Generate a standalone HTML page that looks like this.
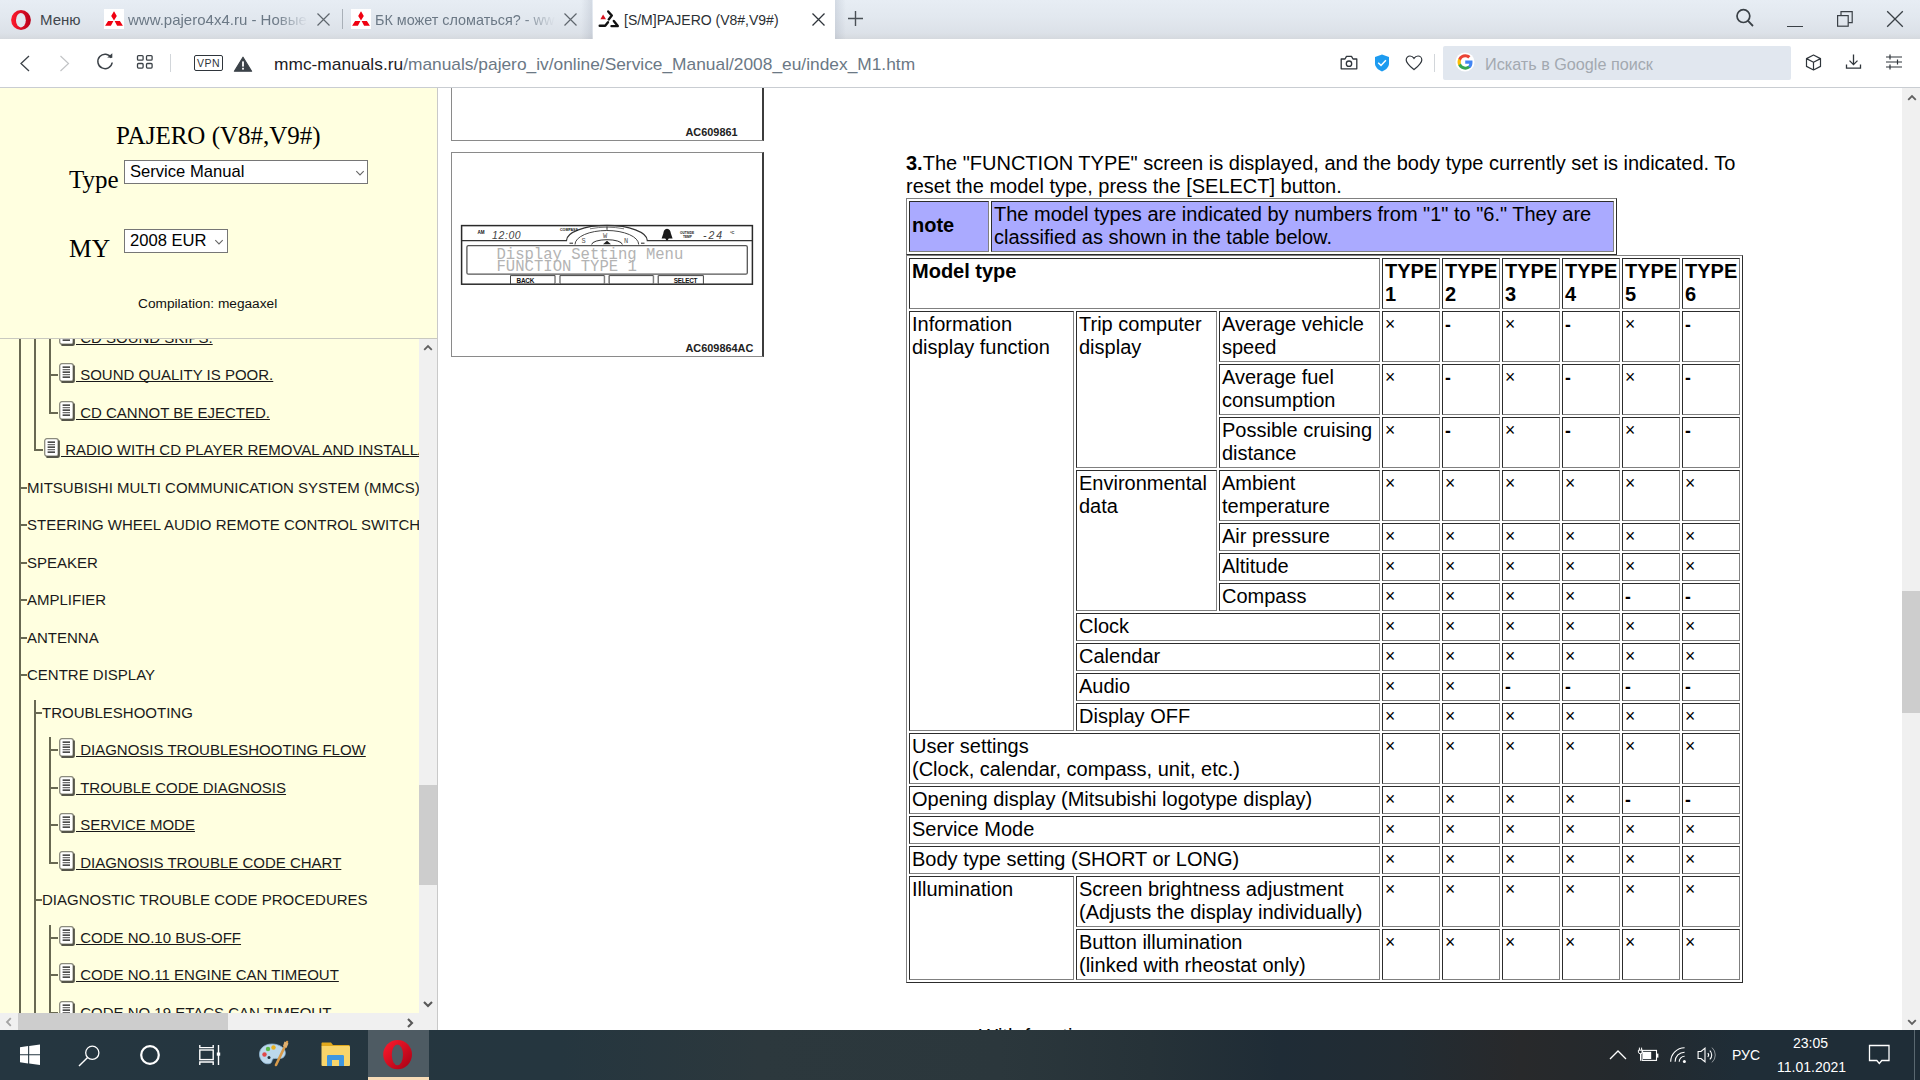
<!DOCTYPE html>
<html><head><meta charset="utf-8">
<style>
*{box-sizing:border-box}
html,body{margin:0;padding:0;width:1920px;height:1080px;overflow:hidden;background:#fff;font-family:"Liberation Sans",sans-serif;position:relative}
.abs{position:absolute}
#tabbar{left:0;top:0;width:1920px;height:39px;background:linear-gradient(#e7edf4 0%,#e2e8ef 45%,#dce1e8 85%,#d5d9de 100%)}
#addr{left:0;top:39px;width:1920px;height:49px;background:#fff;border-bottom:1px solid #c9cdd2}
#lefttop{left:0;top:88px;width:438px;height:251px;background:#ffffe0;border-right:1px solid #c9c9c9;border-bottom:1px solid #c9c9c0}
#tree{left:0;top:339px;width:438px;height:691px;background:#ffffe0;border-right:1px solid #c9c9c9;overflow:hidden}
#right{left:438px;top:88px;width:1482px;height:942px;background:#fff;overflow:hidden}
#taskbar{left:0;top:1030px;width:1920px;height:50px;background:linear-gradient(90deg,#253640 0px,#25363f 560px,#2c383d 760px,#2b373c 1000px,#263238 1150px,#1f2c36 1280px,#222c33 1400px,#28292b 1520px,#24292d 1620px,#1f2d37 1740px,#1f2d37 1920px)}

.img{border:1px solid #8a8a8a;border-right:2px solid #3c3c3c;background:#fff}
.cap{font-size:10.9px;font-weight:bold;color:#222;white-space:nowrap}
.para{font-size:20px;line-height:23px;color:#000;white-space:nowrap}
#mt,#nt{border-collapse:separate;font-size:20px;line-height:23px;color:#000;table-layout:fixed}
#mt td,#nt td{vertical-align:top;padding:1px 1px 1px 2px;white-space:nowrap;overflow:hidden}
#mt tr.h2 td{height:51px}
#mt tr.h1 td{height:28px}
#mt td.t{font-size:17.5px;line-height:23px;padding-left:2px;padding-top:1px}
#mt td.t i{font-style:normal;font-weight:bold;position:relative;top:1px}
.vsb{background:#f0f0f0}
.fav{width:20px;height:20px;background:#fff}
.fade{overflow:hidden;-webkit-mask-image:linear-gradient(90deg,#000 82%,transparent 100%)}
.serif{font-family:"Liberation Serif",serif;color:#000;white-space:nowrap;line-height:1}
.sel{background:#fff;border:1px solid #767676;font-size:16.6px;color:#000}
.sel span{position:absolute;left:5px;top:1px;line-height:19px;white-space:nowrap}
.chev{position:absolute;top:9px}
.tl{background:#686852}
.tr{font-size:15px;line-height:18px;color:#1a1a1a;white-space:nowrap}
.lnk{text-decoration:underline;text-decoration-skip-ink:none}
.doc{width:16px;height:20px}
.tt{font-size:14px;color:#3b3f45;white-space:nowrap}
</style></head><body>

<div id="tabbar" class="abs">
 <svg class="abs" style="left:10px;top:9px" width="22" height="22" viewBox="0 0 22 22"><defs><linearGradient id="og" x1="0" x2="1"><stop offset="0" stop-color="#ff1b2d"/><stop offset="1" stop-color="#b8001a"/></linearGradient></defs><ellipse cx="11" cy="11" rx="9.9" ry="10" fill="url(#og)"/><ellipse cx="10.9" cy="11.2" rx="4.9" ry="7.3" fill="#e2e8ef"/></svg>
 <div class="abs tt" style="left:40px;top:11px;font-size:15px;color:#40464c">Меню</div>
 <!-- tab1 -->
 <div class="abs fav" style="left:104px;top:9px"><svg width="20" height="20" viewBox="0 0 20 20"><path d="M10 2.2L12.8 6.9L10 11.6L7.2 6.9Z M1.1 16.7L4.1 12H9.4L6.9 16.7Z M10.6 12H15.9L18.9 16.7H13.1Z" fill="#f00010"/></svg></div>
 <div class="abs tt fade" style="left:128px;top:11px;width:180px;font-size:15px;color:#6b7885">www.pajero4x4.ru - Новые</div>
 <svg class="abs" style="left:317px;top:13px" width="13" height="13" viewBox="0 0 13 13"><path d="M0.5 0.5L12.5 12.5M12.5 0.5L0.5 12.5" stroke="#5f666d" stroke-width="1.2"/></svg>
 <div class="abs" style="left:342px;top:9px;width:1px;height:20px;background:#a9b0b8"></div>
 <!-- tab2 -->
 <div class="abs fav" style="left:351px;top:9px"><svg width="20" height="20" viewBox="0 0 20 20"><path d="M10 2.2L12.8 6.9L10 11.6L7.2 6.9Z M1.1 16.7L4.1 12H9.4L6.9 16.7Z M10.6 12H15.9L18.9 16.7H13.1Z" fill="#f00010"/></svg></div>
 <div class="abs tt fade" style="left:375px;top:11.5px;width:180px;font-size:14.4px;color:#6b7885">БК может сломаться? - www</div>
 <svg class="abs" style="left:564px;top:13px" width="13" height="13" viewBox="0 0 13 13"><path d="M0.5 0.5L12.5 12.5M12.5 0.5L0.5 12.5" stroke="#5f666d" stroke-width="1.2"/></svg>
 <!-- active tab -->
 <div class="abs" style="left:581px;top:0;width:11px;height:39px;background:linear-gradient(90deg,rgba(0,0,0,0),rgba(120,130,150,0.18))"></div>
 <div class="abs" style="left:835px;top:0;width:11px;height:39px;background:linear-gradient(90deg,rgba(120,130,150,0.18),rgba(0,0,0,0))"></div>
 <div class="abs" style="left:593px;top:0;width:242px;height:40px;background:#fff"></div>
 <svg class="abs" style="left:596px;top:8px" width="26" height="22" viewBox="0 0 26 22"><path d="M7.1 6.6L10 11.2H4.4Z" fill="#d8101c"/><path d="M12.2 3.5L15.8 7.6L12.7 11.4 M12 14.3L9.2 17.8H3.7 M17.8 12.9L21.8 18.1H15.5" fill="none" stroke="#111" stroke-width="2.4" stroke-linecap="round" stroke-linejoin="round"/></svg>
 <div class="abs tt" style="left:624px;top:11.5px;font-size:14px;color:#2b2f33">[S/M]PAJERO (V8#,V9#)</div>
 <svg class="abs" style="left:812px;top:13px" width="13" height="13" viewBox="0 0 13 13"><path d="M0.5 0.5L12.5 12.5M12.5 0.5L0.5 12.5" stroke="#2f353b" stroke-width="1.3"/></svg>
 <svg class="abs" style="left:847px;top:10px" width="17" height="17" viewBox="0 0 17 17"><path d="M8.5 1V16M1 8.5H16" stroke="#4a5056" stroke-width="1.4"/></svg>
 <!-- right -->
 <svg class="abs" style="left:1735px;top:8px" width="20" height="20" viewBox="0 0 20 20"><circle cx="8.4" cy="8.1" r="6.4" fill="none" stroke="#3a4046" stroke-width="1.7"/><path d="M12.8 12.7L18 18" stroke="#3a4046" stroke-width="1.8"/></svg>
 <div class="abs" style="left:1787px;top:26px;width:16px;height:1.2px;background:#3a4046"></div>
 <svg class="abs" style="left:1836px;top:10px" width="18" height="18" viewBox="0 0 18 18"><rect x="1.6" y="5.6" width="10.6" height="10.6" fill="none" stroke="#3a4046" stroke-width="1.2"/><path d="M5 5.6V1.6H16.2V12.6H12.2" fill="none" stroke="#3a4046" stroke-width="1.2"/></svg>
 <svg class="abs" style="left:1886px;top:10px" width="18" height="18" viewBox="0 0 18 18"><path d="M1.2 1.2L16.8 16.8M16.8 1.2L1.2 16.8" stroke="#3a4046" stroke-width="1.3"/></svg>
</div>


<div id="addr" class="abs">
 <svg class="abs" style="left:19px;top:15.5px" width="12" height="18" viewBox="0 0 12 18"><path d="M10 1L2 8.5L10 16" fill="none" stroke="#3b4147" stroke-width="1.3"/></svg>
 <svg class="abs" style="left:59px;top:15.5px" width="12" height="18" viewBox="0 0 12 18"><path d="M1.5 1L9.5 8.5L1.5 16" fill="none" stroke="#c2c4c6" stroke-width="1.2"/></svg>
 <svg class="abs" style="left:96px;top:14px" width="19" height="18" viewBox="0 0 19 18"><path d="M15.3 4.8A7.2 7.2 0 1 0 16.2 9.5" fill="none" stroke="#3b4147" stroke-width="1.5"/><path d="M11.2 4.5L16.3 4.8L16.3 0.2Z" fill="#3b4147"/></svg>
 <svg class="abs" style="left:136px;top:15px" width="18" height="16" viewBox="0 0 18 16"><g fill="none" stroke="#3b4147" stroke-width="1.3"><rect x="1.5" y="1.6" width="5.6" height="4.6" rx="1"/><rect x="10.5" y="1.6" width="5.6" height="4.6" rx="1"/><rect x="1.5" y="9.5" width="5.6" height="4.6" rx="1"/><rect x="10.5" y="9.5" width="5.6" height="4.6" rx="1"/></g></svg>
 <div class="abs" style="left:170px;top:15px;width:1px;height:18px;background:#d2d6da"></div>
 <div class="abs" style="left:194px;top:16px;width:29px;height:16px;border:1.3px solid #2f353b;border-radius:2px;font-size:10.5px;line-height:14px;text-align:center;color:#2f353b;letter-spacing:0.4px">VPN</div>
 <svg class="abs" style="left:233px;top:17px" width="20" height="16" viewBox="0 0 20 16"><path d="M10 1.2L18.6 15.2H1.4Z" fill="#3b4248" stroke="#3b4248" stroke-width="1.2" stroke-linejoin="round"/><rect x="9.1" y="5.4" width="1.8" height="5.2" fill="#fff"/><rect x="9.1" y="11.8" width="1.8" height="1.8" fill="#fff"/></svg>
 <div class="abs tt" style="left:274px;top:14.5px;font-size:17.35px;color:#6b7885"><span style="color:#1d2125">mmc-manuals.ru</span>/manuals/pajero_iv/online/Service_Manual/2008_eu/index_M1.htm</div>
 <svg class="abs" style="left:1340px;top:16px" width="18" height="15" viewBox="0 0 18 15"><path d="M1.2 4H5L6.5 1.4H11.5L13 4H16.8V13.8H1.2Z" fill="none" stroke="#2f353b" stroke-width="1.3" stroke-linejoin="round"/><circle cx="9" cy="8.7" r="2.7" fill="none" stroke="#2f353b" stroke-width="1.3"/></svg>
 <svg class="abs" style="left:1374px;top:15px" width="16" height="18" viewBox="0 0 16 18"><path d="M8 0.5L15 3V9.5C15 13 12 15.8 8 17.5C4 15.8 1 13 1 9.5V3Z" fill="#1d9bf0"/><path d="M4.2 8.8L7 11.4L11.9 6.2" fill="none" stroke="#fff" stroke-width="1.5"/></svg>
 <svg class="abs" style="left:1405px;top:15.7px" width="18" height="16" viewBox="0 0 18 16"><path d="M9 14.6C4.5 10.8 1.2 8.2 1.2 4.9C1.2 2.7 2.9 1 5 1C6.8 1 8.1 2 9 3.4C9.9 2 11.2 1 13 1C15.1 1 16.8 2.7 16.8 4.9C16.8 8.2 13.5 10.8 9 14.6Z" fill="none" stroke="#2f353b" stroke-width="1.2"/></svg>
 <div class="abs" style="left:1434px;top:15px;width:1px;height:18px;background:#d2d6da"></div>
 <div class="abs" style="left:1443px;top:7px;width:348px;height:34px;background:#e1e7ef;border-radius:2px"></div>
 <svg class="abs" style="left:1455px;top:13px" width="20" height="20" viewBox="0 0 20 20"><circle cx="10" cy="10" r="9.5" fill="#fff"/><g transform="translate(10 10) scale(1.15) translate(-9.8 -10)"><path d="M16.3 10.2c0-.5 0-1-.1-1.4H10v2.7h3.6c-.2.9-.7 1.6-1.4 2.1v1.7h2.2c1.2-1.1 1.9-2.8 1.9-4.8z" fill="#4285f4"/><path d="M10 16.7c1.8 0 3.3-.6 4.4-1.6l-2.2-1.7c-.6.4-1.3.7-2.2.7-1.7 0-3.2-1.2-3.7-2.7H4v1.7c1.1 2.2 3.4 3.6 6 3.6z" fill="#34a853"/><path d="M6.3 11.4c-.1-.4-.2-.9-.2-1.4s.1-1 .2-1.4V6.9H4C3.6 7.8 3.3 8.9 3.3 10s.3 2.2.7 3.1l2.3-1.7z" fill="#fbbc05"/><path d="M10 5.9c1 0 1.9.3 2.6 1l1.9-1.9C13.3 3.9 11.8 3.3 10 3.3 7.4 3.3 5.1 4.8 4 6.9l2.3 1.7c.5-1.6 2-2.7 3.7-2.7z" fill="#ea4335"/></g></svg>
 <div class="abs tt" style="left:1485px;top:15.5px;font-size:16.2px;color:#a3a9b0">Искать в Google поиск</div>
 <svg class="abs" style="left:1805px;top:15px" width="17" height="17" viewBox="0 0 17 17"><path d="M8.5 1L15.5 4.6V12.4L8.5 16L1.5 12.4V4.6Z M1.5 4.6L8.5 8.2L15.5 4.6 M8.5 8.2V16" fill="none" stroke="#2f353b" stroke-width="1.2" stroke-linejoin="round"/></svg>
 <svg class="abs" style="left:1845px;top:15px" width="17" height="16" viewBox="0 0 17 16"><path d="M8.5 0.5V10.5M4.5 6.6L8.5 10.6L12.5 6.6M1.5 10.5V14.2H15.5V10.5" fill="none" stroke="#2f353b" stroke-width="1.3"/></svg>
 <svg class="abs" style="left:1885px;top:15px" width="18" height="16" viewBox="0 0 18 16"><path d="M1 3H17M1 8H17M1 13H17M5 0.5V5.5M12.5 5.5V10.5M5 10.5V15.5" fill="none" stroke="#2f353b" stroke-width="1.2"/></svg>
</div>


<div id="lefttop" class="abs">
 <div class="abs serif" style="left:116px;top:35px;font-size:25px">PAJERO (V8#,V9#)</div>
 <div class="abs serif" style="left:69px;top:79px;font-size:25px">Type</div>
 <div class="abs sel" style="left:124px;top:72px;width:244px;height:24px"><span>Service Manual</span><svg class="chev" style="left:230px" width="10" height="6" viewBox="0 0 10 6"><path d="M1.3 1.2L5 4.9L8.7 1.2" fill="none" stroke="#666" stroke-width="1.1"/></svg></div>
 <div class="abs serif" style="left:69px;top:148px;font-size:25.5px">MY</div>
 <div class="abs sel" style="left:124px;top:141px;width:104px;height:24px"><span>2008 EUR</span><svg class="chev" style="left:89px" width="10" height="6" viewBox="0 0 10 6"><path d="M1.3 1.2L5 4.9L8.7 1.2" fill="none" stroke="#666" stroke-width="1.1"/></svg></div>
 <div class="abs tt" style="left:138px;top:208px;font-size:13.7px;color:#111">Compilation: megaaxel</div>
</div>

<div id="tree" class="abs">
<div class="abs tl" style="left:19px;top:0.0px;width:2px;height:674.0px"></div>
<div class="abs tl" style="left:34px;top:0.0px;width:2px;height:112.0px"></div>
<div class="abs tl" style="left:49px;top:0.0px;width:2px;height:74.5px"></div>
<div class="abs tl" style="left:34px;top:360.5px;width:2px;height:313.5px"></div>
<div class="abs tl" style="left:49px;top:398.0px;width:2px;height:126.5px"></div>
<div class="abs tl" style="left:49px;top:586.0px;width:2px;height:88.0px"></div>
<div class="abs tl" style="left:50px;top:-2.5px;width:8px;height:2px"></div>
<div class="abs doc" style="left:59px;top:-13.3px"><svg width="16" height="20" viewBox="0 0 16 20"><rect x="0.7" y="0.7" width="13.6" height="17.4" rx="2.2" fill="#fff" stroke="#8a8a7c" stroke-width="1.3"/><path d="M14.9 2.4V17.4Q14.9 18.9 13.4 18.9H2.4" fill="none" stroke="#55554a" stroke-width="2"/><g stroke-width="1.25"><path d="M3.6 4.2H11M3.6 9.2H11M3.6 14.2H11" stroke="#111"/><path d="M3.6 6.7H11M3.6 11.7H11" stroke="#6c6c6c"/></g></svg></div>
<div class="abs tr lnk" style="left:76px;top:-10.5px">&nbsp;CD SOUND SKIPS.</div>
<div class="abs tl" style="left:50px;top:35.0px;width:8px;height:2px"></div>
<div class="abs doc" style="left:59px;top:24.2px"><svg width="16" height="20" viewBox="0 0 16 20"><rect x="0.7" y="0.7" width="13.6" height="17.4" rx="2.2" fill="#fff" stroke="#8a8a7c" stroke-width="1.3"/><path d="M14.9 2.4V17.4Q14.9 18.9 13.4 18.9H2.4" fill="none" stroke="#55554a" stroke-width="2"/><g stroke-width="1.25"><path d="M3.6 4.2H11M3.6 9.2H11M3.6 14.2H11" stroke="#111"/><path d="M3.6 6.7H11M3.6 11.7H11" stroke="#6c6c6c"/></g></svg></div>
<div class="abs tr lnk" style="left:76px;top:27.0px">&nbsp;SOUND QUALITY IS POOR.</div>
<div class="abs tl" style="left:50px;top:72.5px;width:8px;height:2px"></div>
<div class="abs doc" style="left:59px;top:61.7px"><svg width="16" height="20" viewBox="0 0 16 20"><rect x="0.7" y="0.7" width="13.6" height="17.4" rx="2.2" fill="#fff" stroke="#8a8a7c" stroke-width="1.3"/><path d="M14.9 2.4V17.4Q14.9 18.9 13.4 18.9H2.4" fill="none" stroke="#55554a" stroke-width="2"/><g stroke-width="1.25"><path d="M3.6 4.2H11M3.6 9.2H11M3.6 14.2H11" stroke="#111"/><path d="M3.6 6.7H11M3.6 11.7H11" stroke="#6c6c6c"/></g></svg></div>
<div class="abs tr lnk" style="left:76px;top:64.5px">&nbsp;CD CANNOT BE EJECTED.</div>
<div class="abs tl" style="left:35px;top:110.0px;width:8px;height:2px"></div>
<div class="abs doc" style="left:44px;top:99.2px"><svg width="16" height="20" viewBox="0 0 16 20"><rect x="0.7" y="0.7" width="13.6" height="17.4" rx="2.2" fill="#fff" stroke="#8a8a7c" stroke-width="1.3"/><path d="M14.9 2.4V17.4Q14.9 18.9 13.4 18.9H2.4" fill="none" stroke="#55554a" stroke-width="2"/><g stroke-width="1.25"><path d="M3.6 4.2H11M3.6 9.2H11M3.6 14.2H11" stroke="#111"/><path d="M3.6 6.7H11M3.6 11.7H11" stroke="#6c6c6c"/></g></svg></div>
<div class="abs tr lnk" style="left:61px;top:102.0px">&nbsp;RADIO WITH CD PLAYER REMOVAL AND INSTALLATION</div>
<div class="abs tl" style="left:20px;top:147.5px;width:7px;height:2px"></div>
<div class="abs tr" style="left:27px;top:139.5px">MITSUBISHI MULTI COMMUNICATION SYSTEM (MMCS)</div>
<div class="abs tl" style="left:20px;top:185.0px;width:7px;height:2px"></div>
<div class="abs tr" style="left:27px;top:177.0px">STEERING WHEEL AUDIO REMOTE CONTROL SWITCH</div>
<div class="abs tl" style="left:20px;top:222.5px;width:7px;height:2px"></div>
<div class="abs tr" style="left:27px;top:214.5px">SPEAKER</div>
<div class="abs tl" style="left:20px;top:260.0px;width:7px;height:2px"></div>
<div class="abs tr" style="left:27px;top:252.0px">AMPLIFIER</div>
<div class="abs tl" style="left:20px;top:297.5px;width:7px;height:2px"></div>
<div class="abs tr" style="left:27px;top:289.5px">ANTENNA</div>
<div class="abs tl" style="left:20px;top:335.0px;width:7px;height:2px"></div>
<div class="abs tr" style="left:27px;top:327.0px">CENTRE DISPLAY</div>
<div class="abs tl" style="left:35px;top:372.5px;width:7px;height:2px"></div>
<div class="abs tr" style="left:42px;top:364.5px">TROUBLESHOOTING</div>
<div class="abs tl" style="left:50px;top:410.0px;width:8px;height:2px"></div>
<div class="abs doc" style="left:59px;top:399.2px"><svg width="16" height="20" viewBox="0 0 16 20"><rect x="0.7" y="0.7" width="13.6" height="17.4" rx="2.2" fill="#fff" stroke="#8a8a7c" stroke-width="1.3"/><path d="M14.9 2.4V17.4Q14.9 18.9 13.4 18.9H2.4" fill="none" stroke="#55554a" stroke-width="2"/><g stroke-width="1.25"><path d="M3.6 4.2H11M3.6 9.2H11M3.6 14.2H11" stroke="#111"/><path d="M3.6 6.7H11M3.6 11.7H11" stroke="#6c6c6c"/></g></svg></div>
<div class="abs tr lnk" style="left:76px;top:402.0px">&nbsp;DIAGNOSIS TROUBLESHOOTING FLOW</div>
<div class="abs tl" style="left:50px;top:447.5px;width:8px;height:2px"></div>
<div class="abs doc" style="left:59px;top:436.7px"><svg width="16" height="20" viewBox="0 0 16 20"><rect x="0.7" y="0.7" width="13.6" height="17.4" rx="2.2" fill="#fff" stroke="#8a8a7c" stroke-width="1.3"/><path d="M14.9 2.4V17.4Q14.9 18.9 13.4 18.9H2.4" fill="none" stroke="#55554a" stroke-width="2"/><g stroke-width="1.25"><path d="M3.6 4.2H11M3.6 9.2H11M3.6 14.2H11" stroke="#111"/><path d="M3.6 6.7H11M3.6 11.7H11" stroke="#6c6c6c"/></g></svg></div>
<div class="abs tr lnk" style="left:76px;top:439.5px">&nbsp;TROUBLE CODE DIAGNOSIS</div>
<div class="abs tl" style="left:50px;top:485.0px;width:8px;height:2px"></div>
<div class="abs doc" style="left:59px;top:474.2px"><svg width="16" height="20" viewBox="0 0 16 20"><rect x="0.7" y="0.7" width="13.6" height="17.4" rx="2.2" fill="#fff" stroke="#8a8a7c" stroke-width="1.3"/><path d="M14.9 2.4V17.4Q14.9 18.9 13.4 18.9H2.4" fill="none" stroke="#55554a" stroke-width="2"/><g stroke-width="1.25"><path d="M3.6 4.2H11M3.6 9.2H11M3.6 14.2H11" stroke="#111"/><path d="M3.6 6.7H11M3.6 11.7H11" stroke="#6c6c6c"/></g></svg></div>
<div class="abs tr lnk" style="left:76px;top:477.0px">&nbsp;SERVICE MODE</div>
<div class="abs tl" style="left:50px;top:522.5px;width:8px;height:2px"></div>
<div class="abs doc" style="left:59px;top:511.7px"><svg width="16" height="20" viewBox="0 0 16 20"><rect x="0.7" y="0.7" width="13.6" height="17.4" rx="2.2" fill="#fff" stroke="#8a8a7c" stroke-width="1.3"/><path d="M14.9 2.4V17.4Q14.9 18.9 13.4 18.9H2.4" fill="none" stroke="#55554a" stroke-width="2"/><g stroke-width="1.25"><path d="M3.6 4.2H11M3.6 9.2H11M3.6 14.2H11" stroke="#111"/><path d="M3.6 6.7H11M3.6 11.7H11" stroke="#6c6c6c"/></g></svg></div>
<div class="abs tr lnk" style="left:76px;top:514.5px">&nbsp;DIAGNOSIS TROUBLE CODE CHART</div>
<div class="abs tl" style="left:35px;top:560.0px;width:7px;height:2px"></div>
<div class="abs tr" style="left:42px;top:552.0px">DIAGNOSTIC TROUBLE CODE PROCEDURES</div>
<div class="abs tl" style="left:50px;top:597.5px;width:8px;height:2px"></div>
<div class="abs doc" style="left:59px;top:586.7px"><svg width="16" height="20" viewBox="0 0 16 20"><rect x="0.7" y="0.7" width="13.6" height="17.4" rx="2.2" fill="#fff" stroke="#8a8a7c" stroke-width="1.3"/><path d="M14.9 2.4V17.4Q14.9 18.9 13.4 18.9H2.4" fill="none" stroke="#55554a" stroke-width="2"/><g stroke-width="1.25"><path d="M3.6 4.2H11M3.6 9.2H11M3.6 14.2H11" stroke="#111"/><path d="M3.6 6.7H11M3.6 11.7H11" stroke="#6c6c6c"/></g></svg></div>
<div class="abs tr lnk" style="left:76px;top:589.5px">&nbsp;CODE NO.10 BUS-OFF</div>
<div class="abs tl" style="left:50px;top:635.0px;width:8px;height:2px"></div>
<div class="abs doc" style="left:59px;top:624.2px"><svg width="16" height="20" viewBox="0 0 16 20"><rect x="0.7" y="0.7" width="13.6" height="17.4" rx="2.2" fill="#fff" stroke="#8a8a7c" stroke-width="1.3"/><path d="M14.9 2.4V17.4Q14.9 18.9 13.4 18.9H2.4" fill="none" stroke="#55554a" stroke-width="2"/><g stroke-width="1.25"><path d="M3.6 4.2H11M3.6 9.2H11M3.6 14.2H11" stroke="#111"/><path d="M3.6 6.7H11M3.6 11.7H11" stroke="#6c6c6c"/></g></svg></div>
<div class="abs tr lnk" style="left:76px;top:627.0px">&nbsp;CODE NO.11 ENGINE CAN TIMEOUT</div>
<div class="abs tl" style="left:50px;top:672.5px;width:8px;height:2px"></div>
<div class="abs doc" style="left:59px;top:661.7px"><svg width="16" height="20" viewBox="0 0 16 20"><rect x="0.7" y="0.7" width="13.6" height="17.4" rx="2.2" fill="#fff" stroke="#8a8a7c" stroke-width="1.3"/><path d="M14.9 2.4V17.4Q14.9 18.9 13.4 18.9H2.4" fill="none" stroke="#55554a" stroke-width="2"/><g stroke-width="1.25"><path d="M3.6 4.2H11M3.6 9.2H11M3.6 14.2H11" stroke="#111"/><path d="M3.6 6.7H11M3.6 11.7H11" stroke="#6c6c6c"/></g></svg></div>
<div class="abs tr lnk" style="left:76px;top:664.5px">&nbsp;CODE NO.19 ETACS CAN TIMEOUT</div>
 <div class="abs" style="left:419px;top:0;width:18px;height:674px;background:#f0f0f0"></div>
 <div class="abs" style="left:419px;top:446px;width:18px;height:100px;background:#cdcdcd"></div>
 <svg class="abs" style="left:423px;top:5px" width="10" height="7" viewBox="0 0 10 7"><path d="M1.2 5.8L5 2L8.8 5.8" fill="none" stroke="#606060" stroke-width="1.8"/></svg>
 <svg class="abs" style="left:423px;top:662px" width="10" height="7" viewBox="0 0 10 7"><path d="M1 1L5 5L9 1" fill="none" stroke="#585858" stroke-width="2.1"/></svg>
 <div class="abs" style="left:0;top:674px;width:437px;height:17px;background:#f0f0f0"></div>
 <div class="abs" style="left:18px;top:674px;width:210px;height:17px;background:#cdcdcd"></div>
 <svg class="abs" style="left:5px;top:678px" width="7" height="10" viewBox="0 0 7 10"><path d="M5.8 1.2L2 5L5.8 8.8" fill="none" stroke="#a3a3a3" stroke-width="1.8"/></svg>
 <svg class="abs" style="left:407px;top:679px" width="7" height="10" viewBox="0 0 7 10"><path d="M1 1L5 5L1 9" fill="none" stroke="#585858" stroke-width="2.1"/></svg>
</div>


<div id="right" class="abs">
 <div class="abs img" style="left:13px;top:-150px;width:313px;height:203px">
   <div class="abs cap" style="left:233.5px;top:186.5px">AC609861</div>
 </div>
 <div class="abs img" style="left:13px;top:64px;width:313px;height:205px">
   <svg class="abs" style="left:-1px;top:-1px" width="313" height="205" viewBox="0 0 313 205">
<g fill="none" stroke="#1e1e1e">
<rect x="10.6" y="73.6" width="290.8" height="58.6" stroke-width="1.5" stroke="#2a2a2a"/>
<path d="M11 88.6H115.5A40.4 15.2 0 0 1 196.3 88.6H301" stroke-width="1.2" stroke="#333"/>
<path d="M124 92.5A31.8 14 0 0 1 187.7 92.5" stroke-width="1" stroke="#444"/>
<path d="M139 76.8Q156 73.5 173 76.8" stroke-width="0.8" stroke="#555"/>
<path d="M140.7 92.5A15.3 4.8 0 0 1 171.3 92.5" stroke-width="1" stroke="#333"/>
<path d="M156 74.5V77.8" stroke-width="1" stroke="#333"/>
<rect x="15.9" y="93.6" width="280.4" height="28.6" rx="1.5" stroke-width="1.3" stroke="#555"/>
<path d="M59.5 132V123.6H104V132 M109 132V123.6H153.3V132 M158.2 132V123.6H202.3V132 M207.3 132V123.6H252.4V132" stroke-width="1" stroke="#444"/>
<path d="M104.5 123.6V132M108.5 123.6V132M153.8 123.6V132M157.7 123.6V132M202.8 123.6V132M206.8 123.6V132" stroke-width="0.7" stroke="#999"/>
</g>
<path d="M156 88.8L152 92.3H160Z" fill="#1e1e1e"/>
<path d="M118.5 91.2H122M190 91.2H193.5" stroke="#222" stroke-width="1"/>
<g font-family="Liberation Sans" font-weight="bold" fill="#111">
<text x="26.5" y="82" font-size="4.6">AM</text>
<text x="109" y="79.2" font-size="3.6">COMPASS</text>
<text x="229" y="82.4" font-size="3.2">OUTSIDE</text>
<text x="232" y="86" font-size="3.2">TEMP</text>
<text x="65.5" y="131.3" font-size="6.4" letter-spacing="-0.2">BACK</text>
<text x="222.8" y="131.3" font-size="6.4" letter-spacing="-0.3">SELECT</text>
<text x="279" y="81.5" font-size="4">°C</text>
</g>
<g font-family="Liberation Sans" fill="#444" font-size="10.5" font-style="italic">
<text x="41" y="86.5" letter-spacing="0.6">12:00</text>
<text x="252" y="86.7" letter-spacing="2">-24</text>
</g>
<g font-family="Liberation Mono" fill="#555" font-size="7">
<text x="130.5" y="91">S</text><text x="152" y="86">W</text><text x="173" y="91">N</text>
</g>
<path d="M216 76.8C213.5 76.8 212.6 79 212.3 81.5L210.6 86.5H221.6L219.9 81.5C219.6 79 218.6 76.8 216 76.8Z M214.2 86.5L216 89L217.8 86.5Z" fill="#1a1a1a"/>
<g font-family="Liberation Mono" fill="#b3b3b3" font-size="15.6">
<text x="45.5" y="106.8" letter-spacing="-0.02">Display Setting Menu</text>
<text x="45.5" y="118.6">FUNCTION TYPE 1</text>
</g>
</svg>

   <div class="abs cap" style="left:233.5px;top:188.5px">AC609864AC</div>
 </div>
 <div class="abs para" style="left:468px;top:64px;width:900px"><b>3.</b>The "FUNCTION TYPE" screen is displayed, and the body type currently set is indicated. To<br>reset the model type, press the [SELECT] button.</div>
 <table id="nt" class="abs" style="left:468px;top:110px" cellspacing="2" cellpadding="1" border="1"><tr><td style="width:80px;height:51px;background:#aaaaff;vertical-align:middle"><b style="position:relative;top:-1.5px">note</b></td><td style="width:623px;background:#aaaaff">The model types are indicated by numbers from "1" to "6." They are<br>classified as shown in the table below.</td></tr></table>
 <div class="abs" style="left:468px;top:167px">
<table id="mt" cellspacing="2" cellpadding="1" border="1">
<colgroup><col style="width:165px"><col style="width:141px"><col style="width:161px"><col style="width:58px"><col style="width:58px"><col style="width:58px"><col style="width:58px"><col style="width:58px"><col style="width:58px"></colgroup>
<tr class="h2"><td colspan="3"><b>Model type</b></td><td><b>TYPE<br>1</b></td><td><b>TYPE<br>2</b></td><td><b>TYPE<br>3</b></td><td><b>TYPE<br>4</b></td><td><b>TYPE<br>5</b></td><td><b>TYPE<br>6</b></td></tr>
<tr class="h2"><td rowspan="11">Information<br>display function</td><td rowspan="3">Trip computer<br>display</td><td>Average vehicle<br>speed</td><td class="t">×</td><td class="t"><i>-</i></td><td class="t">×</td><td class="t"><i>-</i></td><td class="t">×</td><td class="t"><i>-</i></td></tr>
<tr class="h2"><td>Average fuel<br>consumption</td><td class="t">×</td><td class="t"><i>-</i></td><td class="t">×</td><td class="t"><i>-</i></td><td class="t">×</td><td class="t"><i>-</i></td></tr>
<tr class="h2"><td>Possible cruising<br>distance</td><td class="t">×</td><td class="t"><i>-</i></td><td class="t">×</td><td class="t"><i>-</i></td><td class="t">×</td><td class="t"><i>-</i></td></tr>
<tr class="h2"><td rowspan="4">Environmental<br>data</td><td>Ambient<br>temperature</td><td class="t">×</td><td class="t">×</td><td class="t">×</td><td class="t">×</td><td class="t">×</td><td class="t">×</td></tr>
<tr class="h1"><td>Air pressure</td><td class="t">×</td><td class="t">×</td><td class="t">×</td><td class="t">×</td><td class="t">×</td><td class="t">×</td></tr>
<tr class="h1"><td>Altitude</td><td class="t">×</td><td class="t">×</td><td class="t">×</td><td class="t">×</td><td class="t">×</td><td class="t">×</td></tr>
<tr class="h1"><td>Compass</td><td class="t">×</td><td class="t">×</td><td class="t">×</td><td class="t">×</td><td class="t"><i>-</i></td><td class="t"><i>-</i></td></tr>
<tr class="h1"><td colspan="2">Clock</td><td class="t">×</td><td class="t">×</td><td class="t">×</td><td class="t">×</td><td class="t">×</td><td class="t">×</td></tr>
<tr class="h1"><td colspan="2">Calendar</td><td class="t">×</td><td class="t">×</td><td class="t">×</td><td class="t">×</td><td class="t">×</td><td class="t">×</td></tr>
<tr class="h1"><td colspan="2">Audio</td><td class="t">×</td><td class="t">×</td><td class="t"><i>-</i></td><td class="t"><i>-</i></td><td class="t"><i>-</i></td><td class="t"><i>-</i></td></tr>
<tr class="h1"><td colspan="2">Display OFF</td><td class="t">×</td><td class="t">×</td><td class="t">×</td><td class="t">×</td><td class="t">×</td><td class="t">×</td></tr>
<tr class="h2"><td colspan="3">User settings<br>(Clock, calendar, compass, unit, etc.)</td><td class="t">×</td><td class="t">×</td><td class="t">×</td><td class="t">×</td><td class="t">×</td><td class="t">×</td></tr>
<tr class="h1"><td colspan="3">Opening display (Mitsubishi logotype display)</td><td class="t">×</td><td class="t">×</td><td class="t">×</td><td class="t">×</td><td class="t"><i>-</i></td><td class="t"><i>-</i></td></tr>
<tr class="h1"><td colspan="3">Service Mode</td><td class="t">×</td><td class="t">×</td><td class="t">×</td><td class="t">×</td><td class="t">×</td><td class="t">×</td></tr>
<tr class="h1"><td colspan="3">Body type setting (SHORT or LONG)</td><td class="t">×</td><td class="t">×</td><td class="t">×</td><td class="t">×</td><td class="t">×</td><td class="t">×</td></tr>
<tr class="h2"><td rowspan="2">Illumination</td><td colspan="2">Screen brightness adjustment<br>(Adjusts the display individually)</td><td class="t">×</td><td class="t">×</td><td class="t">×</td><td class="t">×</td><td class="t">×</td><td class="t">×</td></tr>
<tr class="h2"><td colspan="2">Button illumination<br>(linked with rheostat only)</td><td class="t">×</td><td class="t">×</td><td class="t">×</td><td class="t">×</td><td class="t">×</td><td class="t">×</td></tr>
</table>
 </div>
 <div class="abs para" style="left:541px;top:936.5px">With function</div>
 <div class="abs vsb" style="left:1464px;top:0;width:18px;height:942px"></div>
 <div class="abs" style="left:1464px;top:503px;width:18px;height:122px;background:#cdcdcd"></div>
 <svg class="abs" style="left:1469px;top:6px" width="10" height="7" viewBox="0 0 10 7"><path d="M1.2 5.8L5 2L8.8 5.8" fill="none" stroke="#606060" stroke-width="1.8"/></svg>
 <svg class="abs" style="left:1469px;top:931px" width="10" height="7" viewBox="0 0 10 7"><path d="M1.2 1.2L5 5L8.8 1.2" fill="none" stroke="#606060" stroke-width="1.8"/></svg>
</div>


<div id="taskbar" class="abs">
 <svg class="abs" style="left:19px;top:14px" width="22" height="22" viewBox="0 0 22 22"><path d="M1 3.2L9.1 2.1V10.2H1Z M10.2 1.9L21 0.5V10.2H10.2Z M1 11.3H9.1V19.4L1 18.3Z M10.2 11.3H21V21L10.2 19.6Z" fill="#fff"/></svg>
 <svg class="abs" style="left:78px;top:14px" width="24" height="24" viewBox="0 0 24 24"><circle cx="14.3" cy="8.8" r="6.6" fill="none" stroke="#fff" stroke-width="1.3"/><path d="M9.6 13.5L1 22" stroke="#fff" stroke-width="1.4"/></svg>
 <svg class="abs" style="left:138px;top:13px" width="24" height="24" viewBox="0 0 24 24"><circle cx="12" cy="12" r="8.8" fill="none" stroke="#fff" stroke-width="2.2"/></svg>
 <svg class="abs" style="left:198px;top:14px" width="24" height="22" viewBox="0 0 24 22"><g fill="none" stroke="#fff" stroke-width="1.4"><path d="M1.8 1V3.6H15.2V1"/><rect x="1.8" y="6" width="13.4" height="9.6"/><path d="M1.8 21V18H15.2V21"/><path d="M20.5 1V21"/></g><rect x="18.8" y="8.5" width="3.4" height="3.2" fill="#fff"/></svg>
 <svg class="abs" style="left:258px;top:10px" width="32" height="30" viewBox="0 0 32 30"><path d="M14 4C6 4 1 9 1.5 15C2 21 7 25 12 23.5C15 22.5 13 19 16 18.5C20 18 25 20 27 15C29 9 22 4 14 4Z" fill="#bcd8ec" stroke="#8fb5d0" stroke-width="0.8"/><circle cx="6.5" cy="14.5" r="2.2" fill="#e04848"/><circle cx="10" cy="9" r="2.2" fill="#5cb84a"/><circle cx="15.5" cy="7.5" r="2.2" fill="#e8b020"/><circle cx="11" cy="17.5" r="1.5" fill="#263640"/><path d="M29 2L18 25" stroke="#d79a4a" stroke-width="2.6" stroke-linecap="round"/><path d="M26.5 1.5L30.5 3.5L28.5 8L25 6Z" fill="#e0b070"/></svg>
 <svg class="abs" style="left:321px;top:12px" width="30" height="25" viewBox="0 0 30 25"><path d="M0.5 3V1.5C0.5 0.9 0.9 0.5 1.5 0.5H10L12 3H28.5V5H0.5Z" fill="#e0a81c"/><rect x="0.5" y="4" width="28.5" height="20" rx="1" fill="#f8d56a"/><path d="M6 24V14.3Q6 13 7.3 13H21.7Q23 13 23 14.3V24H18V18H11V24Z" fill="#3f97e0"/></svg>
 <div class="abs" style="left:368px;top:0;width:61px;height:50px;background:#4e5b63"></div>
 <div class="abs" style="left:368px;top:47px;width:61px;height:3px;background:#f8dcb8"></div>
 <svg class="abs" style="left:383px;top:10px" width="30" height="30" viewBox="0 0 30 30"><defs><linearGradient id="og2" x1="0" x2="1" y1="0" y2="1"><stop offset="0" stop-color="#ff1b2d"/><stop offset="1" stop-color="#a70014"/></linearGradient></defs><ellipse cx="14.6" cy="14.6" rx="14.4" ry="14.6" fill="url(#og2)"/><ellipse cx="14.4" cy="14.8" rx="5.6" ry="10.4" fill="#4e5b63"/></svg>
 <!-- tray -->
 <svg class="abs" style="left:1609px;top:20px" width="18" height="10" viewBox="0 0 18 10"><path d="M1 9L9 1L17 9" fill="none" stroke="#fff" stroke-width="1.3"/></svg>
 <svg class="abs" style="left:1637px;top:15px" width="22" height="18" viewBox="0 0 22 18"><path d="M2.4 2.6V5M4.6 2.6V5" stroke="#fff" stroke-width="1"/><path d="M1.4 5.2H5.6V7.2Q5.6 8.6 3.5 8.6Q1.4 8.6 1.4 7.2Z" fill="none" stroke="#fff" stroke-width="1"/><path d="M3.5 8.6V15.7" stroke="#fff" stroke-width="1"/><rect x="5.1" y="5.4" width="14.4" height="10" fill="none" stroke="#fff" stroke-width="1.1"/><rect x="6" y="6.8" width="8.2" height="7.2" fill="#fff"/><rect x="20" y="8.6" width="1.4" height="4" fill="#fff"/></svg>
 <svg class="abs" style="left:1669px;top:16px" width="20" height="18" viewBox="0 0 20 18"><g fill="none" stroke="#fff" stroke-width="1.1"><path d="M1.7 15.7A13.9 13.9 0 0 1 15.6 1.8"/><path d="M6.1 15.7A9.5 9.5 0 0 1 15.6 6.2"/><path d="M10.2 15.7A5.4 5.4 0 0 1 15.6 10.3"/></g><circle cx="15.4" cy="15.5" r="1.5" fill="#fff"/></svg>
 <svg class="abs" style="left:1697px;top:15px" width="22" height="20" viewBox="0 0 22 20"><path d="M1.1 6.5H4L8 3.2V16.8L4 13.5H1.1Z" fill="none" stroke="#fff" stroke-width="1.1"/><path d="M10.8 8.2A2.6 2.6 0 0 1 10.8 11.8M12.8 5.6A6 6 0 0 1 12.8 14.4" fill="none" stroke="#fff" stroke-width="1.1"/><path d="M15 2.6A10 10 0 0 1 15 17.4" fill="none" stroke="#fff" stroke-width="1" opacity="0.5"/></svg>
 <div class="abs tt" style="left:1732px;top:17px;font-size:14px;color:#fff">РУС</div>
 <div class="abs tt" style="left:1793px;top:5px;font-size:14px;color:#fff">23:05</div>
 <div class="abs tt" style="left:1777px;top:29px;font-size:14px;color:#fff">11.01.2021</div>
 <svg class="abs" style="left:1868px;top:14px" width="23" height="22" viewBox="0 0 23 22"><path d="M1.5 1.5H21V16.5H13.8L11.3 19.5L8.8 16.5H1.5Z" fill="none" stroke="#fff" stroke-width="1.3"/></svg>
 <div class="abs" style="left:1914px;top:0;width:1px;height:50px;background:#5a6870"></div>
</div>

</body></html>
